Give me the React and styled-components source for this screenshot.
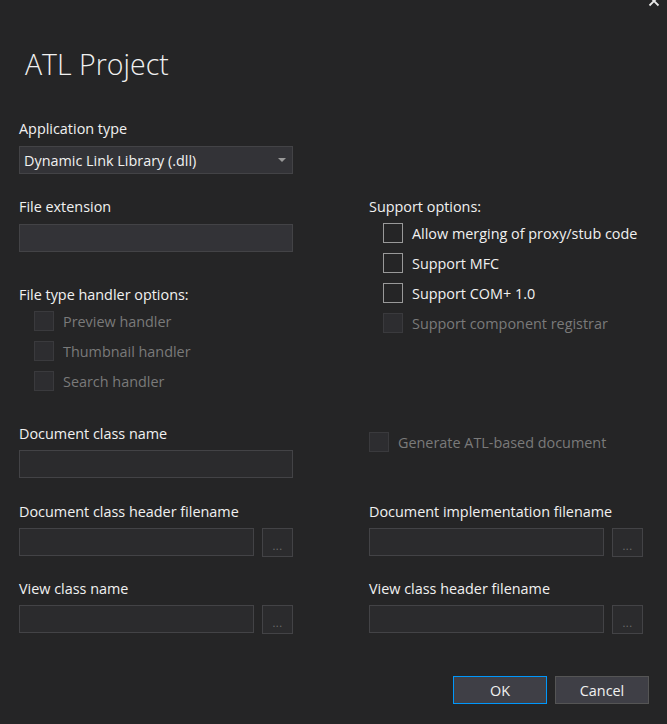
import React from "react";
import styled, { createGlobalStyle } from "styled-components";

const Global = createGlobalStyle`
  html, body { margin: 0; padding: 0; background: #252526; }
  body { font-family: "Open Sans", "Noto Sans", sans-serif; }
  * { box-sizing: border-box; }
`;

const Dialog = styled.div`
  position: relative;
  width: 667px;
  height: 724px;
  background: #252526;
  color: #f1f1f1;
  padding: 44px 18px 0 19px;
  overflow: hidden;
  font-size: 14.4px;
`;

const Close = styled.button`
  position: absolute;
  top: -6px;
  right: 6px;
  width: 14px;
  height: 14px;
  padding: 0;
  border: none;
  background: transparent;
  display: flex;
  align-items: center;
  justify-content: center;
`;

const Title = styled.h1`
  margin: 0 0 0 6px;
  font-size: 28.5px;
  font-weight: 300;
  line-height: 40px;
  color: #f1f1f1;
`;

const Label = styled.div`
  height: 20px;
  line-height: 20px;
  white-space: nowrap;
  color: ${(p) => (p.$disabled ? "#7a7a7a" : "#f1f1f1")};
`;

const Field = styled.div`
  display: flex;
  flex-direction: column;
  gap: ${(p) => p.$gap ?? 7}px;
  margin-top: ${(p) => p.$mt ?? 0}px;
  width: 274px;
`;

const Select = styled.div`
  height: 28px;
  border: 1px solid #434346;
  background: #333337;
  display: flex;
  align-items: center;
  justify-content: space-between;
  padding: 0 5px 0 4px;
  white-space: nowrap;
`;

const Arrow = styled.span`
  width: 0;
  height: 0;
  border-left: 4px solid transparent;
  border-right: 4px solid transparent;
  border-top: 4px solid #999999;
  margin-right: 1px;
`;

const Input = styled.div`
  height: 28px;
  flex: ${(p) => (p.$grow ? "1 1 auto" : "none")};
  border: 1px solid #434346;
  background: ${(p) => (p.$enabled ? "#333337" : "#2b2b2d")};
`;

const InputRow = styled.div`
  display: flex;
  gap: 8px;
`;

const Browse = styled.div`
  width: 31px;
  height: 29px;
  flex: none;
  border: 1px solid #434346;
  background: #2b2b2d;
  color: #6f6f6f;
  font-size: 11px;
  display: flex;
  align-items: flex-end;
  justify-content: center;
  padding-bottom: 5px;
  letter-spacing: 0.5px;
  line-height: 1;
`;

const Grid = styled.div`
  display: grid;
  grid-template-columns: 274px 274px;
  column-gap: 76px;
  margin-top: ${(p) => p.$mt ?? 0}px;
`;

const Column = styled.div`
  display: flex;
  flex-direction: column;
`;

const Group = styled.div`
  display: flex;
  flex-direction: column;
  margin-top: ${(p) => p.$mt ?? 0}px;
`;

const CheckList = styled.div`
  display: flex;
  flex-direction: column;
  margin-top: 1px;
  padding-left: ${(p) => p.$indent ?? 0}px;
`;

const CheckRow = styled.div`
  display: flex;
  align-items: center;
  height: 30px;
  gap: 9px;
  margin-top: ${(p) => p.$mt ?? 0}px;
  color: ${(p) => (p.$disabled ? "#7a7a7a" : "#f1f1f1")};
  white-space: nowrap;
`;

const Box = styled.span`
  width: 20px;
  height: 20px;
  flex: none;
  border: 1px solid ${(p) => (p.$disabled ? "#3a3a3d" : "#999999")};
  background: ${(p) => (p.$disabled ? "#2d2d30" : "transparent")};
`;

const Footer = styled.div`
  display: flex;
  justify-content: flex-end;
  gap: 8px;
  margin-top: 42px;
`;

const Button = styled.button`
  width: 94px;
  height: 28px;
  background: #3f3f46;
  border: 1px solid ${(p) => (p.$primary ? "#0097fb" : "#555555")};
  color: #f1f1f1;
  font-family: inherit;
  font-size: 14.4px;
  padding: 0;
`;

function Check({ label, disabled, mt }) {
  return (
    <CheckRow $disabled={disabled} $mt={mt}>
      <Box $disabled={disabled} />
      <span>{label}</span>
    </CheckRow>
  );
}

function BrowseField({ label, mt }) {
  return (
    <Field $mt={mt} $gap={6}>
      <Label>{label}</Label>
      <InputRow>
        <Input $grow />
        <Browse>...</Browse>
      </InputRow>
    </Field>
  );
}

export default function App() {
  return (
    <>
      <Global />
      <Dialog>
        <Close aria-label="Close">
          <svg width="12" height="12" viewBox="0 0 12 12">
            <path d="M1.5 1.5 L10.5 10.5 M10.5 1.5 L1.5 10.5" stroke="#e8e8e8" strokeWidth="1.8" />
          </svg>
        </Close>
        <Title>ATL Project</Title>
        <Field $mt={35}>
          <Label>Application type</Label>
          <Select>
            <span>Dynamic Link Library (.dll)</span>
            <Arrow />
          </Select>
        </Field>

        <Grid $mt={23}>
          <Column>
            <Field>
              <Label>File extension</Label>
              <Input $enabled />
            </Field>
            <Group $mt={33}>
              <Label>File type handler options:</Label>
              <CheckList $indent={15}>
                <Check label="Preview handler" disabled />
                <Check label="Thumbnail handler" disabled />
                <Check label="Search handler" disabled />
              </CheckList>
            </Group>
          </Column>
          <Column>
            <Group>
              <Label>Support options:</Label>
              <CheckList $indent={14}>
                <Check label="Allow merging of proxy/stub code" />
                <Check label="Support MFC" />
                <Check label="Support COM+ 1.0" />
                <Check label="Support component registrar" disabled />
              </CheckList>
            </Group>
          </Column>
        </Grid>

        <Grid $mt={28}>
          <Field $gap={6}>
            <Label>Document class name</Label>
            <Input />
          </Field>
          <Column>
            <Check label="Generate ATL-based document" disabled mt={3} />
          </Column>
        </Grid>

        <Grid $mt={24}>
          <BrowseField label="Document class header filename" />
          <BrowseField label="Document implementation filename" />
        </Grid>

        <Grid $mt={22}>
          <BrowseField label="View class name" />
          <BrowseField label="View class header filename" />
        </Grid>

        <Footer>
          <Button $primary>OK</Button>
          <Button>Cancel</Button>
        </Footer>
      </Dialog>
    </>
  );
}
